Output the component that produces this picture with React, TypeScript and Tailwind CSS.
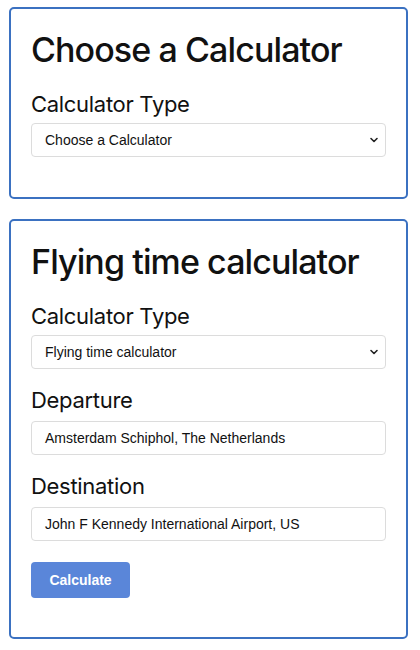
import React from "react";

const Chevron = () => (
  <svg width="10" height="10" viewBox="0 0 10 10" className="absolute right-[6px] top-1/2 -translate-y-1/2 pointer-events-none">
    <path d="M2 3.5 L5 6.5 L8 3.5" fill="none" stroke="#222" strokeWidth="1.6" strokeLinecap="round" strokeLinejoin="round" />
  </svg>
);

const Select = ({ value }: { value: string }) => (
  <div className="relative h-[34px] w-full rounded-[4px] border border-[#dcdcdc] bg-white flex items-center px-[13px]">
    <span className="text-[14px] text-[#111] font-['Liberation_Sans',Arial,sans-serif]">{value}</span>
    <Chevron />
  </div>
);

const Input = ({ value }: { value: string }) => (
  <div className="h-[34px] w-full rounded-[4px] border border-[#dcdcdc] bg-white flex items-center px-[13px]">
    <span className="text-[14px] text-[#111] font-['Liberation_Sans',Arial,sans-serif]">{value}</span>
  </div>
);

const Label = ({ children, className = "" }: { children: React.ReactNode; className?: string }) => (
  <div className={"text-[22px] leading-[28px] tracking-[-0.3px] text-[#111] font-['Inter',sans-serif] " + className}>{children}</div>
);

export default function App() {
  return (
    <div className="w-[420px] bg-white pt-[7px] pl-[9px] pr-[12px] flex flex-col gap-[20px]">
      <div className="border-2 border-[#3b71c1] rounded-[5px] px-[20px] pt-[19px] h-[192px]">
        <h1 className="text-[34px] leading-[44px] font-medium text-[#111] tracking-[-0.9px] font-['Inter',sans-serif]">Choose a Calculator</h1>
        <Label className="mt-[18px] mb-[5px]">Calculator Type</Label>
        <Select value="Choose a Calculator" />
      </div>
      <div className="border-2 border-[#3b71c1] rounded-[5px] px-[20px] pt-[19px] h-[420px]">
        <h1 className="text-[34px] leading-[44px] font-medium text-[#111] tracking-[-0.9px] font-['Inter',sans-serif]">Flying time calculator</h1>
        <Label className="mt-[18px] mb-[5px]">Calculator Type</Label>
        <Select value="Flying time calculator" />
        <Label className="mt-[17px] mb-[7px]">Departure</Label>
        <Input value="Amsterdam Schiphol, The Netherlands" />
        <Label className="mt-[17px] mb-[7px]">Destination</Label>
        <Input value="John F Kennedy International Airport, US" />
        <button className="mt-[21px] h-[36px] w-[99px] rounded-[4px] bg-[#5a86d9] text-white text-[14px] font-bold font-['Liberation_Sans',Arial,sans-serif]">Calculate</button>
      </div>
    </div>
  );
}
